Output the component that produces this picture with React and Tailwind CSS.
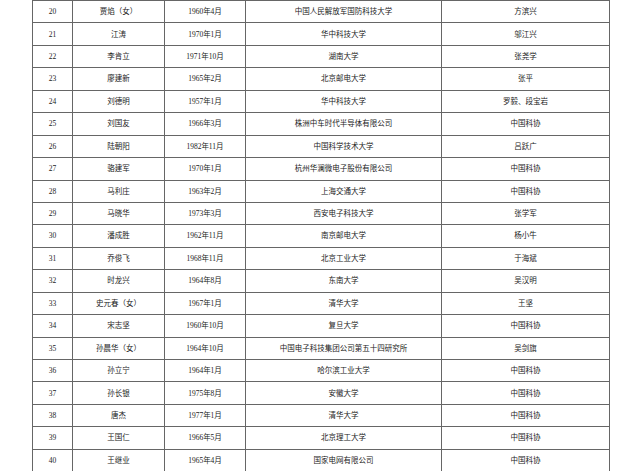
const ROWS = [
  ['20', '贾焰（女）', '1960年4月', '中国人民解放军国防科技大学', '方滨兴'],
  ['21', '江涛', '1970年1月', '华中科技大学', '邬江兴'],
  ['22', '李肯立', '1971年10月', '湖南大学', '张尧学'],
  ['23', '廖建新', '1965年2月', '北京邮电大学', '张平'],
  ['24', '刘德明', '1957年1月', '华中科技大学', '罗毅、段宝岩'],
  ['25', '刘国友', '1966年3月', '株洲中车时代半导体有限公司', '中国科协'],
  ['26', '陆朝阳', '1982年11月', '中国科学技术大学', '吕跃广'],
  ['27', '骆建军', '1970年1月', '杭州华澜微电子股份有限公司', '中国科协'],
  ['28', '马利庄', '1963年2月', '上海交通大学', '中国科协'],
  ['29', '马晓华', '1973年3月', '西安电子科技大学', '张学军'],
  ['30', '潘成胜', '1962年11月', '南京邮电大学', '杨小牛'],
  ['31', '乔俊飞', '1968年11月', '北京工业大学', '于海斌'],
  ['32', '时龙兴', '1964年8月', '东南大学', '吴汉明'],
  ['33', '史元春（女）', '1967年1月', '清华大学', '王坚'],
  ['34', '宋志坚', '1960年10月', '复旦大学', '中国科协'],
  ['35', '孙晨华（女）', '1964年10月', '中国电子科技集团公司第五十四研究所', '吴剑旗'],
  ['36', '孙立宁', '1964年1月', '哈尔滨工业大学', '中国科协'],
  ['37', '孙长银', '1975年8月', '安徽大学', '中国科协'],
  ['38', '唐杰', '1977年1月', '清华大学', '中国科协'],
  ['39', '王国仁', '1966年5月', '北京理工大学', '中国科协'],
  ['40', '王继业', '1965年4月', '国家电网有限公司', '中国科协'],
];

const COLS = ['w-[40px]', 'w-[92px]', 'w-[81px]', 'w-[196px]', 'w-[167px]'];

export default function App() {
  return (
    <div className="h-[472px] w-[640px] overflow-hidden bg-white">
      <div
        className="ml-[32px] w-[578px] border-x border-[#666] text-[7.5px] text-[#222]"
        style={{ fontFamily: '"Liberation Serif", "Noto Sans CJK SC", serif' }}
      >
        {ROWS.map((r) => (
          <div key={r[0]} className="flex h-[22.45px] border-t border-[#666]">
            {r.map((cell, i) => (
              <div
                key={i}
                className={`${COLS[i]} shrink-0 flex items-center justify-center whitespace-nowrap ${i < 4 ? 'border-r border-[#666]' : ''}`}
              >
                {cell}
              </div>
            ))}
          </div>
        ))}
      </div>
    </div>
  );
}
